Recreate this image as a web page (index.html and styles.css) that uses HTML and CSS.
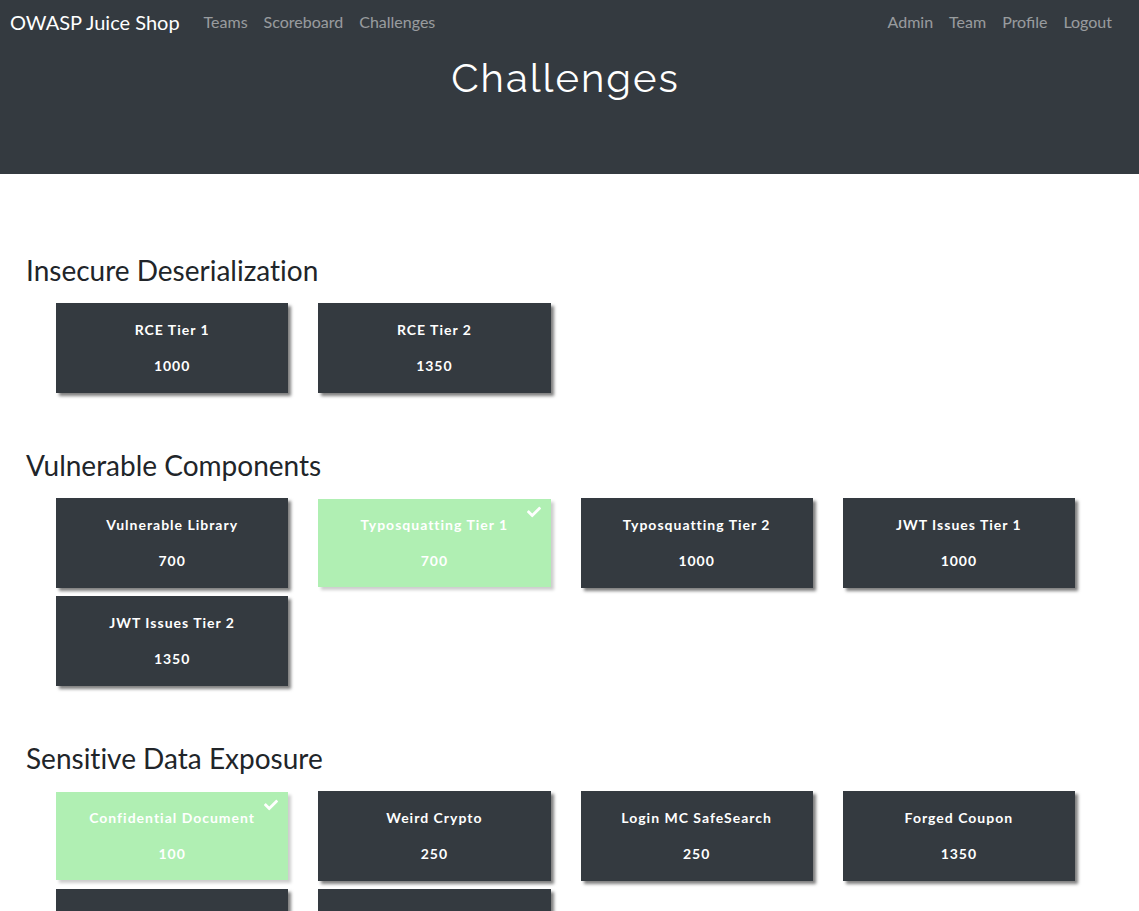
FILE: index.html
```html
<!DOCTYPE html>
<html lang="en">
<head>
<meta charset="utf-8">
<meta name="viewport" content="width=device-width, initial-scale=1">
<title>OWASP Juice Shop</title>
<link rel="stylesheet" href="styles.css">
</head>
<body>
<svg class="sprite" aria-hidden="true"><symbol id="check" viewBox="0 0 512 512"><path d="M173.898 439.404l-166.4-166.4c-9.997-9.997-9.997-26.206 0-36.204l36.203-36.204c9.997-9.998 26.207-9.998 36.204 0L192 312.69 432.095 72.596c9.997-9.997 26.207-9.997 36.204 0l36.203 36.204c9.997 9.997 9.997 26.206 0 36.204l-294.4 294.401c-9.998 9.997-26.207 9.997-36.204-.001z"/></symbol></svg>
<header class="header">
  <nav class="navbar">
    <a class="brand" href="#">OWASP Juice Shop</a>
    <div class="links">
      <a href="#">Teams</a>
      <a href="#">Scoreboard</a>
      <a href="#">Challenges</a>
    </div>
    <div class="links links-right">
      <a href="#">Admin</a>
      <a href="#">Team</a>
      <a href="#">Profile</a>
      <a href="#">Logout</a>
    </div>
  </nav>
  <h1 class="title">Challenges</h1>
</header>
<main class="board">
  <section class="category">
    <h2>Insecure Deserialization</h2>
    <div class="cards">
      <button class="card"><span>RCE Tier 1</span><span>1000</span></button>
      <button class="card"><span>RCE Tier 2</span><span>1350</span></button>
    </div>
  </section>
  <section class="category">
    <h2>Vulnerable Components</h2>
    <div class="cards">
      <button class="card"><span>Vulnerable Library</span><span>700</span></button>
      <button class="card solved"><svg class="check" aria-hidden="true"><use href="#check"/></svg><span>Typosquatting Tier 1</span><span>700</span></button>
      <button class="card"><span>Typosquatting Tier 2</span><span>1000</span></button>
      <button class="card"><span>JWT Issues Tier 1</span><span>1000</span></button>
      <button class="card"><span>JWT Issues Tier 2</span><span>1350</span></button>
    </div>
  </section>
  <section class="category">
    <h2>Sensitive Data Exposure</h2>
    <div class="cards">
      <button class="card solved"><svg class="check" aria-hidden="true"><use href="#check"/></svg><span>Confidential Document</span><span>100</span></button>
      <button class="card"><span>Weird Crypto</span><span>250</span></button>
      <button class="card"><span>Login MC SafeSearch</span><span>250</span></button>
      <button class="card"><span>Forged Coupon</span><span>1350</span></button>
      <button class="card" aria-label="Challenge"></button>
      <button class="card" aria-label="Challenge"></button>
    </div>
  </section>
</main>
</body>
</html>
```
FILE: styles.css
```css
* { box-sizing: border-box; }
html { overflow: hidden; }
body {
  margin: 0;
  height: 100vh;
  overflow: hidden;
  background: #fff;
  color: #212529;
  font-family: Lato, sans-serif;
  font-size: 16px;
  line-height: 24px;
}
.sprite { display: none; }
.header {
  background: #343a40;
  padding-bottom: 72px;
}
.navbar {
  display: flex;
  align-items: center;
  padding: 7px 27px 9px 10px;
}
.navbar a { text-decoration: none; }
.navbar .brand {
  color: #fff;
  font-size: 20px;
  line-height: 30px;
  margin-right: 24px;
}
.links { display: flex; gap: 16px; }
.links a { color: rgba(255, 255, 255, 0.5); }
.links-right { margin-left: auto; }
.title {
  margin: 8px 8px 0 0;
  color: #fff;
  font-family: Raleway, Lato, sans-serif;
  font-size: 40px;
  font-weight: 400;
  line-height: 48px;
  letter-spacing: 2px;
  text-align: center;
}
.board { padding: 79px 64px 0 26px; }
.category { margin-bottom: 55px; }
.category h2 {
  margin: 0 0 16px;
  font-size: 28px;
  font-weight: 400;
  line-height: 34px;
  font-variant-ligatures: none;
}
.cards {
  display: grid;
  grid-template-columns: repeat(4, 1fr);
  gap: 8px 30px;
  padding-left: 30px;
}
.card {
  position: relative;
  display: flex;
  flex-direction: column;
  align-items: center;
  gap: 12px;
  min-height: 90px;
  padding: 15px 12px;
  border: 0;
  background: #343a40;
  box-shadow: 3px 3px 3px rgba(0, 0, 0, 0.5);
  color: #fff;
  font: 700 14px/24px Lato, sans-serif;
  letter-spacing: 1px;
  cursor: pointer;
}
.solved {
  min-height: 88px;
  margin: 1px 0;
  padding: 14px 12px;
  background: #b0efb3;
  box-shadow: 3px 3px 3px rgba(0, 0, 0, 0.2);
}
.check {
  position: absolute;
  top: 6px;
  right: 10px;
  width: 14px;
  height: 14px;
  fill: currentColor;
}
```
